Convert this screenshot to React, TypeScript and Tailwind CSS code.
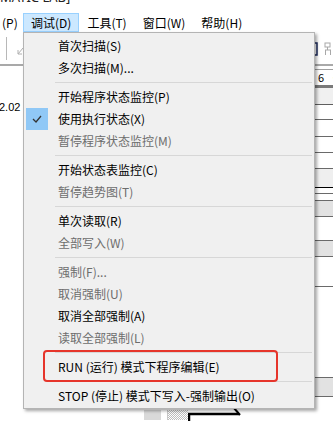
import React from 'react';

type Entry =
  | { sep: true }
  | { sep?: false; label: string; disabled?: boolean; checked?: boolean; marked?: boolean };

const entries: Entry[] = [
  { label: '首次扫描(S)' },
  { label: '多次扫描(M)...' },
  { sep: true },
  { label: '开始程序状态监控(P)' },
  { label: '使用执行状态(X)', checked: true },
  { label: '暂停程序状态监控(M)', disabled: true },
  { sep: true },
  { label: '开始状态表监控(C)' },
  { label: '暂停趋势图(T)', disabled: true },
  { sep: true },
  { label: '单次读取(R)' },
  { label: '全部写入(W)', disabled: true },
  { sep: true },
  { label: '强制(F)...', disabled: true },
  { label: '取消强制(U)', disabled: true },
  { label: '取消全部强制(A)' },
  { label: '读取全部强制(L)', disabled: true },
  { sep: true },
  { label: 'RUN (运行) 模式下程序编辑(E)', marked: true },
  { sep: true },
  { label: 'STOP (停止) 模式下写入-强制输出(O)' },
];

const MenuBarItem = ({ label, active }: { label: string; active?: boolean }) => (
  <div
    className={
      active
        ? 'flex items-center border border-[#99d1ff] bg-[#cce8ff] px-[7px]'
        : 'flex items-center border border-transparent px-[7px]'
    }
  >
    {label}
  </div>
);

const DebugMenu = () => (
  <div className="absolute left-[23px] top-[32px] w-[292px] border border-[#b4b4b4] bg-[#f0f0f0] pb-[1px] pt-[2px] shadow-[2px_2px_3px_rgba(0,0,0,0.35)]">
    {entries.map((e, i) =>
      e.sep ? (
        <div key={i} className="flex h-[7px] items-center pl-[31px] pr-[2px]">
          <div className="h-px w-full bg-[#d7d7d7]" />
        </div>
      ) : (
        <div key={i} className="relative flex h-[22px] items-center pl-[2px]">
          <div className="flex h-[22px] w-[22px] items-center justify-center">
            {e.checked && (
              <div className="flex h-[22px] w-[22px] items-center justify-center bg-[#90c8f6]">
                <svg width="12" height="10" viewBox="0 0 12 10">
                  <path d="M2 5 L5 8 L10 2" fill="none" stroke="#333" strokeWidth="1.3" />
                </svg>
              </div>
            )}
          </div>
          <span className={e.disabled ? 'ml-[10px] text-[#6d6d6d]' : 'ml-[10px] text-black'}>
            {e.label}
          </span>
          {e.marked && (
            <div className="pointer-events-none absolute bottom-[-4px] left-[19px] right-[36px] top-[-6px] rounded-[4px] border-2 border-[#e6352b]" />
          )}
        </div>
      ),
    )}
  </div>
);

const RightStrip = () => (
  <div className="flex w-[18px] flex-col bg-white">
    <div className="h-[3px]" />
    <div className="flex h-[14px] items-center overflow-hidden border-t border-[#a0a0a0] pl-[3px] text-[11px] leading-[12px] text-black">
      6<span className="ml-[5px]">·</span>
    </div>
    <div className="h-[2px]" />
    <div className="h-[3px] bg-[#7a7a7a]" />
    <div className="h-[17px] border-b border-[#5f5f5f] bg-[#f0f0f0]" />
    <div className="h-[15px] border-b border-[#6a6a6a]" />
    <div className="h-[17px] border-b border-[#6a6a6a]" />
    <div className="h-[16px] border-b border-[#6a6a6a]" />
    <div className="h-[16px] border-b border-[#6a6a6a]" />
    <div className="h-[19px] border-b border-black bg-[#efefef]" />
    <div className="h-[6px] border-b border-[#6a6a6a]" />
    <div className="h-[7px] border-b border-[#6a6a6a]" />
    <div className="h-[16px] border-b border-[#6a6a6a] bg-[#e2e2e2]" />
    <div className="h-[24px] border-b border-[#6a6a6a]" />
    <div className="h-[16px] border-b border-[#6a6a6a] bg-[#e2e2e2]" />
    <div className="h-[30px] border-b border-[#6a6a6a]" />
    <div className="h-[91px] border-b border-[#6a6a6a]" />
    <div className="h-[19px] border-b border-[#6a6a6a] bg-[#e2e2e2]" />
  </div>
);

export default function App() {
  return (
    <div className="relative h-[422px] w-[333px] overflow-hidden bg-white font-['Noto_Sans_CJK_SC','Noto_Sans',sans-serif] text-[12px] text-black">
      <div className="h-[13px] overflow-hidden">
        <div className="-mt-[9px] font-['Noto_Sans',sans-serif] text-[13px] leading-[13px] text-[#222]">
          MATIC LAB]
        </div>
      </div>
      <div className="flex h-[19px] leading-[17px]">
        <div className="flex w-[23px] items-center pl-[2px]">(P)</div>
        <MenuBarItem label="调试(D)" active />
        <MenuBarItem label="工具(T)" />
        <MenuBarItem label="窗口(W)" />
        <MenuBarItem label="帮助(H)" />
      </div>
      <div className="flex h-[34px] border-b-2 border-[#a9a9a9] bg-white">
        <div className="flex w-[315px] items-start">
          <div className="ml-[6px] mt-[5px] h-[23px] w-px bg-[#b8b8b8]" />
          <svg className="ml-[10px] mt-[15px]" width="7" height="8" viewBox="0 0 7 8">
            <path d="M6 1 L1 7 M1 3 L1 7 L5 7" fill="none" stroke="#b0b0b0" strokeWidth="1" />
          </svg>
        </div>
        <div className="flex flex-1 items-start pt-[10px]">
          <svg width="18" height="14" viewBox="0 0 18 14">
            <path d="M0 1 H2 V13 H0" fill="none" stroke="#1b2a5c" strokeWidth="1.5" />
            <rect x="10" y="1" width="5" height="4" fill="none" stroke="#a8a8a8" />
            <path d="M12.5 5 V8 M10 8 H16 M10.5 8 V13 M15.5 8 V13" fill="none" stroke="#a8a8a8" />
          </svg>
        </div>
      </div>
      <div className="flex h-[354px]">
        <div className="w-[23px]">
          <div className="ml-[-1px] mt-[35px] font-['Liberation_Sans',sans-serif] text-[11px] leading-[13px]">2.02</div>
        </div>
        <div className="flex w-[292px] flex-col">
          <div className="mt-auto flex h-[12px] items-end pl-[121px]">
            <div className="h-[10px] w-[17px] bg-[#d9d9d9]" />
            <div className="ml-[6px] h-[10px] w-[21px] border-l border-[#c8c8c8] bg-[repeating-conic-gradient(#bdbdbd_0_25%,#ffffff_0_50%)] bg-[length:2px_2px]" />
            <svg className="-mb-px" width="54" height="13" viewBox="0 0 54 13">
              <path d="M1 13 V6 H51" fill="none" stroke="#000" strokeWidth="2.5" />
              <path d="M46 0 L52 7" fill="none" stroke="#000" strokeWidth="2" />
            </svg>
          </div>
        </div>
        <RightStrip />
      </div>
      <DebugMenu />
    </div>
  );
}
